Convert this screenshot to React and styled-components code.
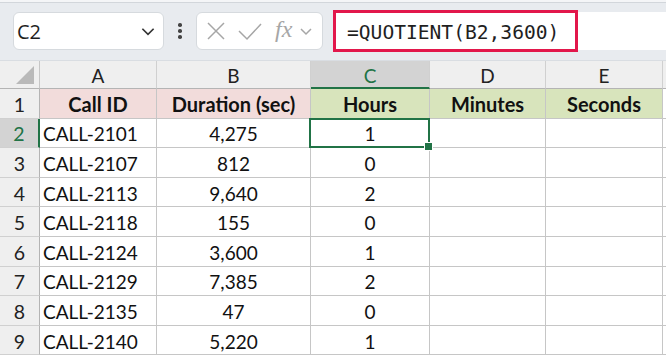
import React from "react";
import styled, { createGlobalStyle } from "styled-components";

const GlobalStyle = createGlobalStyle`
  html, body { margin: 0; padding: 0; background: #ffffff; }
  body { font-family: "Lato", "Liberation Sans", sans-serif; }
`;

const rows = [
  ["CALL-2101", "4,275", "1"],
  ["CALL-2107", "812", "0"],
  ["CALL-2113", "9,640", "2"],
  ["CALL-2118", "155", "0"],
  ["CALL-2124", "3,600", "1"],
  ["CALL-2129", "7,385", "2"],
  ["CALL-2135", "47", "0"],
  ["CALL-2140", "5,220", "1"],
];

const green = "#217346";

function App() {
  return (
    <Page>
      <GlobalStyle />
      <Toolbar>
        <NameBox>
          <span>C2</span>
          <Chevron size={18} />
        </NameBox>
        <Dots>
          <i />
          <i />
          <i />
        </Dots>
        <IconBox>
          <svg width="22" height="22" viewBox="0 0 22 22">
            <path d="M3 3 L19 19 M19 3 L3 19" stroke="#a6a6a6" strokeWidth="1.5" fill="none" />
          </svg>
          <svg width="26" height="22" viewBox="0 0 26 22">
            <path d="M2 11 L10 19 L24 4" stroke="#a6a6a6" strokeWidth="1.5" fill="none" />
          </svg>
          <Fx>fx</Fx>
          <Chevron size={16} light />
        </IconBox>
        <FormulaBar>
          <Highlight>=QUOTIENT(B2,3600)</Highlight>
        </FormulaBar>
      </Toolbar>
      <Grid>
        <Corner>
          <svg width="18" height="18" viewBox="0 0 18 18">
            <path d="M18 0 L18 18 L0 18 Z" fill="#b9b9b9" />
          </svg>
        </Corner>
        {["A", "B", "C", "D", "E"].map((c) => (
          <ColHead key={c} active={c === "C"}>{c}</ColHead>
        ))}
        <ColHead />
        <RowHead>1</RowHead>
        <HeadCell tone="pink">Call ID</HeadCell>
        <HeadCell tone="pink">Duration (sec)</HeadCell>
        <HeadCell tone="green">Hours</HeadCell>
        <HeadCell tone="green">Minutes</HeadCell>
        <HeadCell tone="green">Seconds</HeadCell>
        <Cell />
        {rows.map(([id, dur, hrs], i) => (
          <React.Fragment key={id}>
            <RowHead active={i === 0}>{i + 2}</RowHead>
            <Cell>{id}</Cell>
            <Cell center>{dur}</Cell>
            <Cell center selected={i === 0}>{hrs}</Cell>
            <Cell />
            <Cell />
            <Cell />
          </React.Fragment>
        ))}
      </Grid>
    </Page>
  );
}

function Chevron({ size, light }) {
  return (
    <svg width={size} height={size} viewBox="0 0 16 16">
      <path
        d="M3 6 L8 11 L13 6"
        stroke={light ? "#a6a6a6" : "#333"}
        strokeWidth="1.5"
        fill="none"
      />
    </svg>
  );
}

export default App;

const Page = styled.div`
  width: 666px;
  height: 357px;
  overflow: hidden;
  background: #fff;
`;

const Toolbar = styled.div`
  height: 58px;
  display: flex;
  align-items: center;
  padding: 0 0 0 13px;
  background: #e8ebef;
  border-top: 2px solid #f4f5f7;
  border-bottom: 1px solid #d9dde2;
  box-shadow: inset 0 1px 0 #d2d6db;
`;

const NameBox = styled.div`
  width: 151px;
  height: 38px;
  box-sizing: border-box;
  display: flex;
  align-items: center;
  justify-content: space-between;
  padding: 0 6px 0 3px;
  background: #fff;
  border: 1px solid #d6dade;
  border-radius: 6px;
  font-family: "Open Sans", "Liberation Sans", sans-serif;
  font-size: 20px;
  color: #1f1f1f;
`;

const Dots = styled.div`
  width: 32px;
  display: flex;
  flex-direction: column;
  align-items: center;
  gap: 2.5px;
  i {
    width: 3.5px;
    height: 3.5px;
    border-radius: 50%;
    background: #444;
  }
`;

const IconBox = styled.div`
  width: 127px;
  height: 38px;
  box-sizing: border-box;
  display: flex;
  align-items: center;
  gap: 10px;
  padding: 0 3px 0 8px;
  background: #fff;
  border: 1px solid #d6dade;
  border-radius: 6px;
`;

const Fx = styled.span`
  font-family: "Liberation Serif", serif;
  font-style: italic;
  font-size: 24px;
  color: #a6a6a6;
  margin-left: 2px;
  margin-right: -4px;
  margin-top: -3px;
`;

const FormulaBar = styled.div`
  flex: 1;
  height: 38px;
  margin-left: 10px;
  display: flex;
  align-items: center;
  background: #fff;
`;

const Highlight = styled.div`
  height: 42px;
  width: 245px;
  box-sizing: border-box;
  display: flex;
  align-items: center;
  padding: 2px 0 0 11px;
  border: 3px solid #e2174b;
  font-family: "DejaVu Sans Mono", "Liberation Mono", monospace;
  font-size: 19.6px;
  color: #1f1f1f;
`;

const Grid = styled.div`
  display: grid;
  grid-template-columns: 40px 117px 154px 119px 116px 117px 1fr;
  grid-template-rows: 28px repeat(9, 29.6px);
`;

const Corner = styled.div`
  background: #efefef;
  border-right: 1px solid #c6c6c6;
  border-bottom: 1px solid #b4b4b4;
  display: flex;
  align-items: flex-end;
  justify-content: flex-end;
  padding: 0 5px 4px 0;
`;

const ColHead = styled.div`
  display: flex;
  align-items: center;
  justify-content: center;
  padding-top: 2px;
  font-size: 19px;
  color: ${(p) => (p.active ? green : "#222")};
  background: ${(p) => (p.active ? "#d3d3d3" : "#efefef")};
  border-right: 1px solid #d0d0d0;
  border-bottom: ${(p) => (p.active ? `2px solid ${green}` : "1px solid #b4b4b4")};
`;

const RowHead = styled.div`
  display: flex;
  align-items: center;
  justify-content: center;
  padding-top: 2px;
  font-size: 19.5px;
  color: ${(p) => (p.active ? green : "#222")};
  background: ${(p) => (p.active ? "#d3d3d3" : "#efefef")};
  border-bottom: 1px solid #d0d0d0;
  border-right: ${(p) => (p.active ? `2px solid ${green}` : "1px solid #b4b4b4")};
`;

const tones = { pink: "#f2dcdb", green: "#d8e4bc" };

const HeadCell = styled.div`
  display: flex;
  align-items: center;
  justify-content: center;
  padding-top: 2px;
  font-weight: 700;
  font-size: 20px;
  color: #111;
  background: ${(p) => tones[p.tone]};
  border-right: 1px solid #c6c6c6;
  border-bottom: 1px solid #c6c6c6;
`;

const Cell = styled.div`
  position: relative;
  display: flex;
  align-items: center;
  justify-content: ${(p) => (p.center ? "center" : "flex-start")};
  padding: 2px 0 0 ${(p) => (p.center ? "0" : "3px")};
  font-size: 19px;
  color: #111;
  border-right: 1px solid #c6c6c6;
  border-bottom: 1px solid #c6c6c6;
  ${(p) =>
    p.selected &&
    `
    &::after {
      content: "";
      position: absolute;
      left: -2px;
      top: -1px;
      right: -1px;
      bottom: -1px;
      border: 2px solid ${green};
    }
    &::before {
      content: "";
      position: absolute;
      right: -4px;
      bottom: -4px;
      width: 7px;
      height: 7px;
      background: ${green};
      border: 1px solid #fff;
      z-index: 2;
    }
  `}
`;
